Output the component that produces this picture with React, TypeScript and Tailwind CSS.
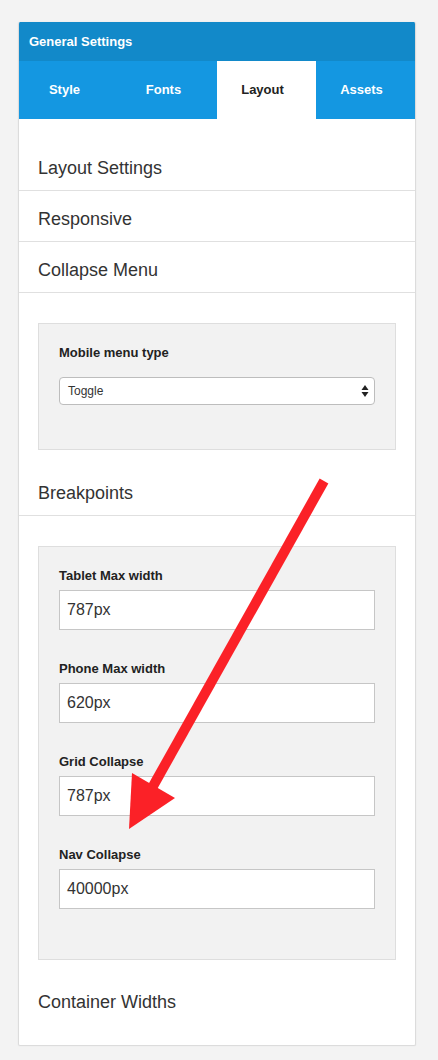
import React from "react";

const font = { fontFamily: '"Liberation Sans", Arial, Helvetica, sans-serif' };

function Item({ label, border = true }: { label: string; border?: boolean }) {
  return (
    <div
      className={`h-[51px] px-[19px] pt-[16px] text-[18px] leading-[24px] text-[#333333] ${
        border ? "border-b border-[#e0e0e0]" : ""
      }`}
    >
      {label}
    </div>
  );
}

function Field({ label, value, last }: { label: string; value: string; last?: boolean }) {
  return (
    <div className={last ? "" : "mb-[30px]"}>
      <div className="mb-[5px] text-[13px] font-bold leading-[18px] text-[#222222]">{label}</div>
      <div className="flex h-[40px] items-center border border-[#c6c6c6] bg-white pl-[7px] text-[16px] text-[#333333]">
        {value}
      </div>
    </div>
  );
}

export default function App() {
  return (
    <div className="relative h-[1060px] w-full overflow-hidden bg-[#f3f3f3]" style={font}>
      <div className="mx-[18px] pt-[22px]">
        <div className="w-[398px] overflow-hidden rounded-[2px] border border-t-0 border-[#dcdcdc] bg-white shadow-[0_0_2px_rgba(0,0,0,0.06)]">
          <div className="flex h-[39px] items-center bg-[#1289c9] px-[10px] text-[13px] font-bold text-white">
            General Settings
          </div>
          <div className="grid h-[58px] grid-cols-4 bg-[#1497e1] text-[13px] font-bold">
            <div className="flex items-center justify-center pr-[8px] text-white">Style</div>
            <div className="flex items-center justify-center pr-[8px] text-white">Fonts</div>
            <div className="flex items-center justify-center bg-white pr-[8px] text-[#222222]">Layout</div>
            <div className="flex items-center justify-center pr-[8px] text-white">Assets</div>
          </div>
          <div className="pt-[21px] pb-[20px]">
            <Item label="Layout Settings" />
            <Item label="Responsive" />
            <Item label="Collapse Menu" />
            <div className="mx-[19px] mt-[30px] mb-[15px] border border-[#dedede] bg-[#f2f2f2] px-[20px] pt-[20px] pb-[44px]">
              <div className="mb-[15px] text-[13px] font-bold leading-[18px] text-[#222222]">Mobile menu type</div>
              <div className="flex h-[28px] items-center justify-between rounded-[4px] border border-[#bdbdbd] bg-white pl-[8px] pr-[5px] text-[12px] text-[#333333]">
                <span>Toggle</span>
                <svg width="8" height="14" viewBox="0 0 8 14">
                  <polygon points="4,1 7.5,6 0.5,6" fill="#222" />
                  <polygon points="0.5,8 7.5,8 4,13" fill="#222" />
                </svg>
              </div>
            </div>
            <Item label="Breakpoints" />
            <div className="mx-[19px] mt-[30px] mb-[14px] border border-[#dedede] bg-[#f2f2f2] px-[20px] pt-[20px] pb-[50px]">
              <Field label="Tablet Max width" value="787px" />
              <Field label="Phone Max width" value="620px" />
              <Field label="Grid Collapse" value="787px" />
              <Field label="Nav Collapse" value="40000px" last />
            </div>
            <Item label="Container Widths" border={false} />
          </div>
        </div>
      </div>
      <svg
        className="pointer-events-none absolute left-0 top-0"
        width="438"
        height="1060"
        viewBox="0 0 438 1060"
      >
        <line x1="324" y1="481" x2="152" y2="788" stroke="#fb2127" strokeWidth="10" />
        <polygon points="129,829 132,773 175,798" fill="#fb2127" />
      </svg>
    </div>
  );
}
